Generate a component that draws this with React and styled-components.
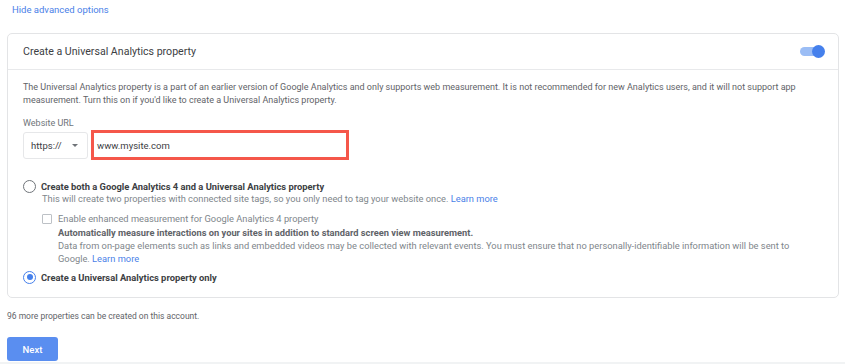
import React from "react";
import styled, { createGlobalStyle } from "styled-components";

const Global = createGlobalStyle`
  html, body { margin: 0; padding: 0; background: #f1f3f4; }
  body { font-family: Roboto, "Liberation Sans", Arial, sans-serif; color: #5f6368; }
`;

const Page = styled.div`
  background: #fff;
  height: 362px;
  box-sizing: border-box;
  padding: 4px 6px 0 7px;
  display: flex;
  flex-direction: column;
`;

const TopLink = styled.a`
  font-size: 9.5px;
  color: #4a7fe8;
  margin-left: 5px;
  line-height: 12px;
  height: 12px;
  cursor: pointer;
`;

const Card = styled.section`
  margin-top: 17px;
  border: 1px solid #e3e4e6;
  border-radius: 5px;
  display: flex;
  flex-direction: column;
`;

const CardHeader = styled.header`
  height: 35px;
  display: flex;
  align-items: center;
  justify-content: space-between;
  padding: 0 15px 0 15px;
  border-bottom: 1px solid #e8e9eb;
`;

const Title = styled.h2`
  margin: 0;
  font-size: 10.6px;
  font-weight: 400;
  color: #3c4043;
`;

const Toggle = styled.span`
  position: relative;
  width: 23px;
  height: 9px;
  border-radius: 5px;
  background: #9bbdf5;
  display: inline-block;
  &::after {
    content: "";
    position: absolute;
    right: -2px;
    top: -2px;
    width: 13px;
    height: 13px;
    border-radius: 50%;
    background: #4580ec;
  }
`;

const CardBody = styled.div`
  padding: 11px 15px 14px 15px;
  display: flex;
  flex-direction: column;
`;

const Desc = styled.p`
  margin: 0;
  font-size: 9px;
  line-height: 13px;
  color: #5f6368;
`;

const Label = styled.div`
  margin-top: 10px;
  font-size: 9px;
  line-height: 12px;
  color: #70757a;
`;

const UrlRow = styled.div`
  margin-top: 1px;
  display: flex;
  align-items: center;
  gap: 3px;
`;

const Select = styled.div`
  width: 65px;
  height: 27px;
  box-sizing: border-box;
  border: 1px solid #e6e7e9;
  border-radius: 3px;
  display: flex;
  align-items: center;
  justify-content: space-between;
  padding: 0 9px 0 7px;
  font-size: 9.5px;
  color: #3c4043;
`;

const Caret = styled.span`
  width: 0;
  height: 0;
  border-left: 3px solid transparent;
  border-right: 3px solid transparent;
  border-top: 3px solid #6f7378;
`;

const UrlInput = styled.div`
  width: 258px;
  height: 30px;
  box-sizing: border-box;
  border: 3px solid #f5574a;
  display: flex;
  align-items: center;
  padding-left: 3px;
  font-size: 9.5px;
  color: #3c4043;
`;

const Options = styled.div`
  margin-top: 20px;
  display: flex;
  flex-direction: column;
`;

const OptionRow = styled.div`
  display: flex;
  align-items: center;
  gap: 5px;
  height: 12px;
  margin-top: ${(p) => p.$mt || 0}px;
`;

const Radio = styled.span`
  width: 13px;
  height: 13px;
  box-sizing: border-box;
  border-radius: 50%;
  border: 1.5px solid ${(p) => (p.$checked ? "#4580ec" : "#70757a")};
  display: inline-flex;
  align-items: center;
  justify-content: center;
  &::after {
    content: "";
    width: 6px;
    height: 6px;
    border-radius: 50%;
    background: ${(p) => (p.$checked ? "#4580ec" : "transparent")};
  }
`;

const OptionLabel = styled.span`
  font-size: 9.35px;
  font-weight: 700;
  color: #3c4043;
  line-height: 13px;
`;

const Sub = styled.div`
  padding-left: 19px;
  display: flex;
  flex-direction: column;
`;

const SubText = styled.div`
  font-size: 9.3px;
  line-height: 13px;
  color: ${(p) => (p.$dark ? "#5f6368" : "#80868b")};
  font-weight: ${(p) => (p.$bold ? 700 : 400)};
`;

const Link = styled.a`
  color: #4a7fe8;
  cursor: pointer;
`;

const CheckRow = styled.div`
  margin-top: 7px;
  display: flex;
  align-items: center;
  gap: 6px;
`;

const Checkbox = styled.span`
  width: 10px;
  height: 10px;
  box-sizing: border-box;
  border: 1px solid #bdc1c6;
  border-radius: 1px;
`;

const Nested = styled.div`
  padding-left: 16px;
  margin-top: 1px;
  display: flex;
  flex-direction: column;
`;

const Footnote = styled.div`
  margin-top: 12px;
  font-size: 8.5px;
  line-height: 12px;
  color: #5f6368;
`;

const NextButton = styled.button`
  margin-top: 15px;
  width: 51px;
  height: 24px;
  border: none;
  border-radius: 3px;
  background: #5a8ef0;
  color: #fff;
  font-family: inherit;
  font-size: 9.5px;
  font-weight: 500;
  align-self: flex-start;
`;

export default function App() {
  return (
    <>
      <Global />
      <Page>
        <TopLink>Hide advanced options</TopLink>
        <Card>
          <CardHeader>
            <Title>Create a Universal Analytics property</Title>
            <Toggle />
          </CardHeader>
          <CardBody>
            <Desc>
              The Universal Analytics property is a part of an earlier version of Google Analytics and only supports web measurement. It is not recommended for new Analytics users, and it will not support app measurement. Turn this on if you'd like to create a Universal Analytics property.
            </Desc>
            <Label>Website URL</Label>
            <UrlRow>
              <Select>
                https://
                <Caret />
              </Select>
              <UrlInput>www.mysite.com</UrlInput>
            </UrlRow>
            <Options>
              <OptionRow>
                <Radio />
                <OptionLabel>Create both a Google Analytics 4 and a Universal Analytics property</OptionLabel>
              </OptionRow>
              <Sub>
                <SubText>
                  This will create two properties with connected site tags, so you only need to tag your website once. <Link>Learn more</Link>
                </SubText>
                <CheckRow>
                  <Checkbox />
                  <SubText>Enable enhanced measurement for Google Analytics 4 property</SubText>
                </CheckRow>
                <Nested>
                  <SubText $bold $dark>Automatically measure interactions on your sites in addition to standard screen view measurement.</SubText>
                  <SubText>
                    Data from on-page elements such as links and embedded videos may be collected with relevant events. You must ensure that no personally-identifiable information will be sent to Google. <Link>Learn more</Link>
                  </SubText>
                </Nested>
              </Sub>
              <OptionRow $mt={6}>
                <Radio $checked />
                <OptionLabel>Create a Universal Analytics property only</OptionLabel>
              </OptionRow>
            </Options>
          </CardBody>
        </Card>
        <Footnote>96 more properties can be created on this account.</Footnote>
        <NextButton>Next</NextButton>
      </Page>
    </>
  );
}
